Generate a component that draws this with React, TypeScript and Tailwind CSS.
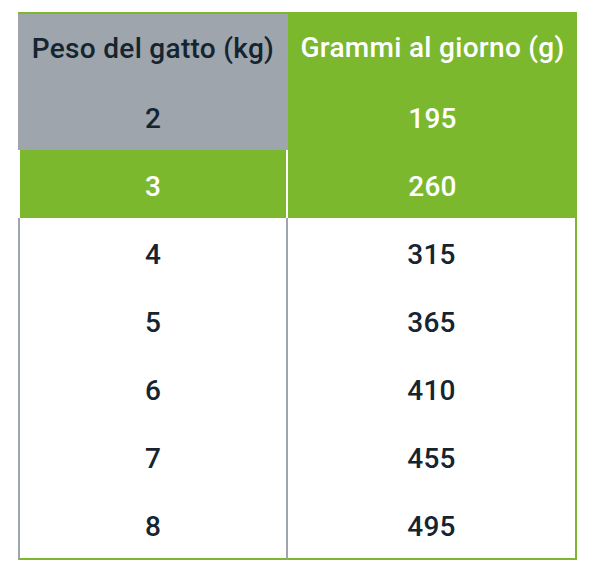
import React from "react";

const GRAY = "bg-[#9ea5ac]";

interface Row {
  kg: number;
  grams: number;
}

const rows: Row[] = [
  { kg: 4, grams: 315 },
  { kg: 5, grams: 365 },
  { kg: 6, grams: 410 },
  { kg: 7, grams: 455 },
  { kg: 8, grams: 495 },
];

export default function App() {
  return (
    <div
      className="min-h-[580px] w-[596px] bg-white pl-[18px] pt-[12px] text-[#15242f]"
      style={{ fontFamily: 'Roboto, "Open Sans", sans-serif' }}
    >
      <div className="grid w-[559px] grid-cols-[270px_289px] text-[28px] font-medium tracking-[0.3px]">
        {/* intestazione */}
        <div className={`flex h-[70px] items-center justify-center border-t-2 border-[#7cb82e] ${GRAY} pt-[1px]`}>
          <span>Peso del gatto (kg)</span>
        </div>
        <div className="flex h-[70px] items-center justify-center bg-[#7cb82e] pt-[1px] text-white">
          <span>Grammi al giorno (g)</span>
        </div>

        {/* 2 kg */}
        <div className={`flex h-[68px] items-center justify-center ${GRAY} pt-[5px]`}>2</div>
        <div className="flex h-[68px] items-center justify-center bg-[#7cb82e] pt-[5px] text-white">195</div>

        {/* 3 kg */}
        <div className="flex h-[68px] items-center justify-center border-x-2 border-white bg-[#7cb82e] pt-[5px] text-white">
          3
        </div>
        <div className="flex h-[68px] items-center justify-center bg-[#7cb82e] pt-[5px] text-white">260</div>

        {rows.map((r, i) => {
          const last = i === rows.length - 1;
          return (
            <React.Fragment key={r.kg}>
              <div
                className={`flex items-center justify-center border-x-2 border-[#9ea5ac] pt-[5px] ${
                  last ? "h-[70px] border-b-2 border-b-[#7cb82e]" : "h-[68px]"
                }`}
              >
                {r.kg}
              </div>
              <div
                className={`flex items-center justify-center border-r-2 border-[#7cb82e] pt-[5px] ${
                  last ? "h-[70px] border-b-2" : "h-[68px]"
                }`}
              >
                {r.grams}
              </div>
            </React.Fragment>
          );
        })}
      </div>
    </div>
  );
}
